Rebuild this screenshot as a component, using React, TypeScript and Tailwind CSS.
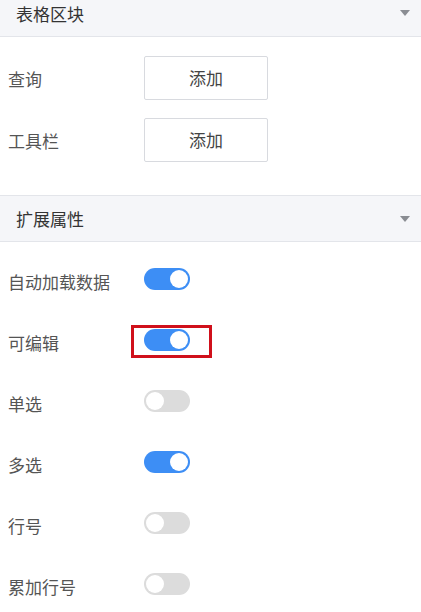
const font = { fontFamily: '"Noto Sans CJK SC", "Noto Sans", sans-serif' };

const Caret = () => (
  <svg width="10" height="6" viewBox="0 0 10 6" className="mr-[11px]">
    <path d="M0 0 H10 L5 6 Z" fill="#8a8d93" />
  </svg>
);

const Toggle = ({ on }: { on: boolean }) => (
  <div
    className={`w-[46px] h-[22px] rounded-full flex items-center px-[2px] ${
      on ? "bg-[#3d8ef5] justify-end" : "bg-[#dcdcdc] justify-start"
    }`}
  >
    <div className="w-[18px] h-[18px] rounded-full bg-white" />
  </div>
);

const toggles = [
  { label: "自动加载数据", on: true },
  { label: "可编辑", on: true, marked: true },
  { label: "单选", on: false },
  { label: "多选", on: true },
  { label: "行号", on: false },
  { label: "累加行号", on: false },
];

const App = () => {
  return (
    <div className="w-[421px] h-[612px] bg-white overflow-hidden" style={font}>
      {/* 表格区块 */}
      <div className="h-[37px] bg-[#f5f6f9] border-b border-[#e3e5ea] flex items-start justify-between pl-[16px] pt-[2px]">
        <span className="text-[17px] leading-[24px] text-[#333]">表格区块</span>
        <div className="pt-[8px]">
          <Caret />
        </div>
      </div>

      <div className="flex flex-col gap-[18px] pt-[19px] pb-[33px]">
        {["查询", "工具栏"].map((label) => (
          <div key={label} className="flex items-center">
            <span className="w-[144px] pl-[8px] pt-[2px] text-[17px] text-[#555]">{label}</span>
            <button className="w-[124px] h-[44px] border border-[#d8dadf] rounded-[2px] bg-white text-[17px] text-[#444]">
              添加
            </button>
          </div>
        ))}
      </div>

      {/* 扩展属性 */}
      <div className="h-[47px] bg-[#f5f6f9] border-y border-[#e3e5ea] flex items-center justify-between pl-[16px]">
        <span className="text-[17px] leading-[24px] text-[#333]">扩展属性</span>
        <Caret />
      </div>

      <div className="flex flex-col pt-[6px]">
        {toggles.map((t) => (
          <div key={t.label} className="h-[61px] flex items-center">
            <span className="w-[144px] pl-[8px] pt-[6px] text-[17px] text-[#555]">{t.label}</span>
            <div className="relative">
              <Toggle on={t.on} />
              {t.marked && (
                <div className="absolute left-[-13px] top-[-4px] w-[81px] h-[33px] border-[3px] border-[#d0101b]" />
              )}
            </div>
          </div>
        ))}
      </div>
    </div>
  );
};

export default App;
